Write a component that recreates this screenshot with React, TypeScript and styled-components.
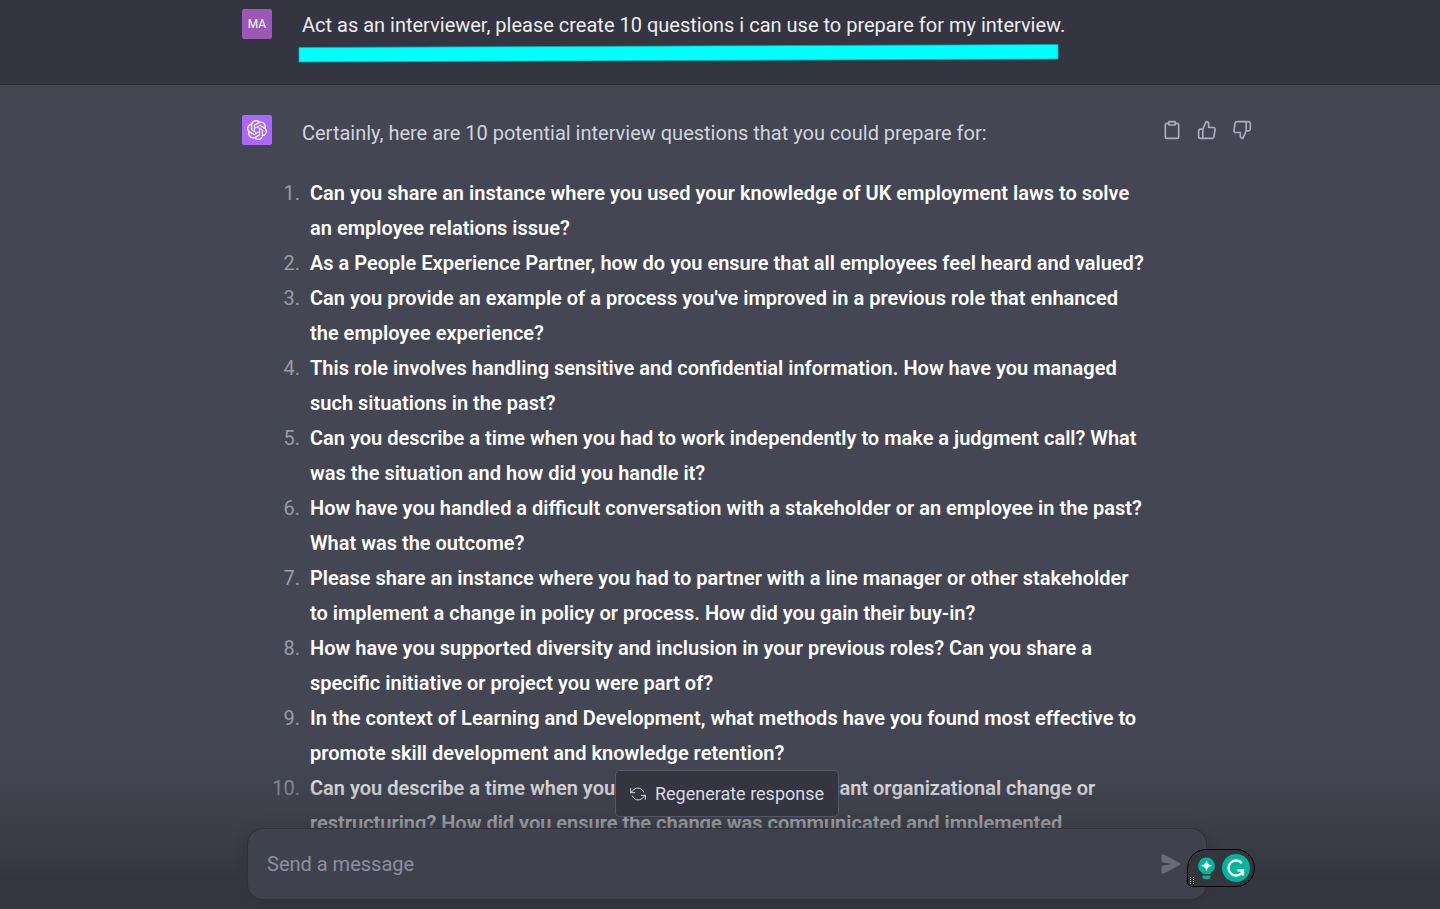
import React from 'react';
import styled, { createGlobalStyle } from 'styled-components';
import { FiClipboard, FiRefreshCcw, FiThumbsDown, FiThumbsUp } from 'react-icons/fi';
import { SiOpenai } from 'react-icons/si';

const GlobalStyle = createGlobalStyle`
  *, *::before, *::after { box-sizing: border-box; }
  body {
    margin: 0;
    background: #444654;
    font-family: Roboto, "Liberation Sans", sans-serif;
  }
  button { font: inherit; cursor: pointer; }
`;

const Page = styled.div`
  position: relative;
  display: flex;
  flex-direction: column;
  height: 100vh;
  overflow: hidden;
`;

const Turn = styled.section<{ $from: 'user' | 'assistant' }>`
  flex: ${p => (p.$from === 'user' ? 'none' : '1 0 auto')};
  padding: ${p => (p.$from === 'user' ? '9px 0 21px' : '30px 0')};
  background: ${p => (p.$from === 'user' ? '#343541' : '#444654')};
  color: ${p => (p.$from === 'user' ? '#ececf1' : '#d1d5db')};
  border-bottom: ${p => (p.$from === 'user' ? '1px solid #2a2b32' : 'none')};
`;

const TurnInner = styled.div`
  display: flex;
  align-items: flex-start;
  max-width: 956px;
  margin: 0 auto;
`;

const Avatar = styled.div<{ $color: string }>`
  display: flex;
  align-items: center;
  justify-content: center;
  flex: none;
  width: 30px;
  height: 30px;
  margin-right: 30px;
  border-radius: 2px;
  background: ${p => p.$color};
  color: #fff;
  font-size: 12px;
`;

const Content = styled.div`
  flex: 1;
  min-width: 0;
`;

const Prompt = styled.p`
  margin: 0;
  font-size: 20px;
  line-height: 32px;
`;

const Underline = styled.svg`
  display: block;
  width: 762px;
  max-width: 100%;
  height: 20px;
  margin: 2px 0 0 -4px;
`;

const Intro = styled.p`
  margin: 0 0 24px;
  font-size: 20px;
  line-height: 37px;
`;

const Questions = styled.ol`
  margin: 0 0 0 -33px;
  padding: 0;
  list-style: none;
  font-size: 20px;
  line-height: 35px;
`;

const Question = styled.li`
  display: grid;
  grid-template-columns: 31px 1fr;
  column-gap: 10px;
`;

const Index = styled.span`
  color: #9a9aab;
  text-align: right;
`;

const Strong = styled.strong`
  color: #fff;
  font-weight: 600;
`;

const Actions = styled.div`
  display: flex;
  flex: none;
  gap: 15px;
  margin: 5px -54px 0 12px;
`;

const IconButton = styled.button`
  display: flex;
  padding: 0;
  border: 0;
  background: none;
  color: #acacbe;
`;

const Footer = styled.footer`
  position: absolute;
  inset: auto 0 0 0;
  display: flex;
  flex-direction: column;
  align-items: center;
  gap: 11px;
  padding: 11px 0 9px 14px;
  background: linear-gradient(180deg, rgba(53, 55, 64, 0), #353740 80%);
`;

const Regenerate = styled.button`
  display: flex;
  align-items: center;
  gap: 9px;
  height: 47px;
  padding: 0 14px;
  border: 1px solid #565869;
  border-radius: 5px;
  background: #343541;
  color: #d9d9e3;
  font-size: 18px;
`;

const Composer = styled.form`
  position: relative;
  display: flex;
  align-items: center;
  width: 100%;
  max-width: 960px;
  height: 72px;
  padding: 0 25px 0 19px;
  border: 1px solid rgba(32, 33, 35, 0.5);
  border-radius: 16px;
  background: #40414f;
  box-shadow: 0 0 15px rgba(0, 0, 0, 0.1);
`;

const MessageInput = styled.input`
  flex: 1;
  min-width: 0;
  padding: 0;
  border: 0;
  outline: 0;
  background: none;
  color: #fff;
  font: 20px/30px Roboto, "Liberation Sans", sans-serif;
  &::placeholder { color: #8e8ea0; opacity: 1; }
`;

const SendButton = styled(IconButton)`
  color: #6b6c7b;
`;

const Assistant = styled.div`
  position: absolute;
  right: -49px;
  bottom: 12px;
  display: flex;
  align-items: center;
  gap: 7px;
  width: 68px;
  height: 38px;
  padding: 0 4px 0 10px;
  border: 1px solid #000;
  border-radius: 19px 19px 19px 5px;
  background: #34353d;
`;

const Grip = styled.svg`
  position: absolute;
  left: 2px;
  bottom: 2px;
`;

const questions = [
  'Can you share an instance where you used your knowledge of UK employment laws to solve an employee relations issue?',
  'As a People Experience Partner, how do you ensure that all employees feel heard and valued?',
  "Can you provide an example of a process you've improved in a previous role that enhanced the employee experience?",
  'This role involves handling sensitive and confidential information. How have you managed such situations in the past?',
  'Can you describe a time when you had to work independently to make a judgment call? What was the situation and how did you handle it?',
  'How have you handled a difficult conversation with a stakeholder or an employee in the past? What was the outcome?',
  'Please share an instance where you had to partner with a line manager or other stakeholder to implement a change in policy or process. How did you gain their buy-in?',
  'How have you supported diversity and inclusion in your previous roles? Can you share a specific initiative or project you were part of?',
  'In the context of Learning and Development, what methods have you found most effective to promote skill development and knowledge retention?',
  'Can you describe a time when you had to manage a significant organizational change or restructuring? How did you ensure the change was communicated and implemented',
];

export default function App() {
  return (
    <>
      <GlobalStyle />
      <Page>
        <Turn $from="user">
          <TurnInner>
            <Avatar $color="#9b58b5">MA</Avatar>
            <Content>
              <Prompt>
                Act as an interviewer, please create 10 questions i can use to prepare for my interview.
              </Prompt>
              <Underline viewBox="0 0 762 20" preserveAspectRatio="none" aria-hidden="true">
                <polygon points="1,4.5 760,1.5 760,16 1,19" fill="#00ffff" stroke="#12a9b0" strokeWidth="0.8" />
              </Underline>
            </Content>
          </TurnInner>
        </Turn>

        <Turn $from="assistant">
          <TurnInner>
            <Avatar $color="#ab68ff">
              <SiOpenai size={20} aria-label="ChatGPT" />
            </Avatar>
            <Content>
              <Intro>Certainly, here are 10 potential interview questions that you could prepare for:</Intro>
              <Questions>
                {questions.map((question, i) => (
                  <Question key={question}>
                    <Index>{i + 1}.</Index>
                    <Strong>{question}</Strong>
                  </Question>
                ))}
              </Questions>
            </Content>
            <Actions>
              <IconButton aria-label="Copy"><FiClipboard size={20} /></IconButton>
              <IconButton aria-label="Good response"><FiThumbsUp size={20} /></IconButton>
              <IconButton aria-label="Bad response"><FiThumbsDown size={20} /></IconButton>
            </Actions>
          </TurnInner>
        </Turn>

        <Footer>
          <Regenerate type="button">
            <FiRefreshCcw size={16} strokeWidth={1.5} aria-hidden="true" />
            Regenerate response
          </Regenerate>
          <Composer onSubmit={e => e.preventDefault()}>
            <MessageInput type="text" aria-label="Send a message" placeholder="Send a message" />
            <SendButton type="submit" aria-label="Send">
              <svg width="20" height="20" viewBox="0 0 16 16" fill="currentColor" aria-hidden="true">
                <path d="M.5 1.163A1 1 0 0 1 1.97.28l12.868 6.837a1 1 0 0 1 0 1.766L1.969 15.72A1 1 0 0 1 .5 14.836V10.33a1 1 0 0 1 .816-.983L8.5 8 1.316 6.653A1 1 0 0 1 .5 5.67V1.163Z" />
              </svg>
            </SendButton>
            <Assistant>
              <IconButton type="button" aria-label="Writing ideas">
                <svg width="17" height="23" viewBox="0 0 17 23" aria-hidden="true">
                  <path d="M8.5 0.5a8.2 8.2 0 0 0-4.6 15c.5.4.8.9.8 1.5h7.6c0-.6.3-1.1.8-1.5a8.2 8.2 0 0 0-4.6-15z" fill="#00b59b" />
                  <path d="M4.500 18.500h8v1a2.500 2.500 0 0 1-2.500 2.500h-3a2.500 2.500 0 0 1-2.500-2.500z" fill="#00b59b" />
                  <path d="M8.5 3.6c.8 3.300 1.800 4.300 5.100 5.100-3.300.8-4.300 1.800-5.100 5.100-.8-3.300-1.800-4.300-5.100-5.100 3.300-.8 4.300-1.800 5.100-5.100z" fill="#fff" stroke="#fff" strokeWidth="0.5" />
                </svg>
              </IconButton>
              <IconButton type="button" aria-label="Grammarly">
                <svg width="28" height="28" viewBox="0 0 28 28" aria-hidden="true">
                  <circle cx="14" cy="14" r="14" fill="#00b59b" />
                  <path d="M19.8 9.2A7.500 7.500 0 1 0 20.500 17.800M15.500 16.200h5.500v5.300" fill="none" stroke="#fff" strokeWidth="2.4" />
                </svg>
              </IconButton>
              <Grip width="4" height="7" viewBox="0 0 4 7" aria-hidden="true">
                <path d="M0 0h1v1H0zM3 0h1v1H3zM0 2h1v1H0zM3 2h1v1H3zM0 4h1v1H0zM3 4h1v1H3zM0 6h1v1H0zM3 6h1v1H3z" fill="#c4c4cc" />
              </Grip>
            </Assistant>
          </Composer>
        </Footer>
      </Page>
    </>
  );
}
